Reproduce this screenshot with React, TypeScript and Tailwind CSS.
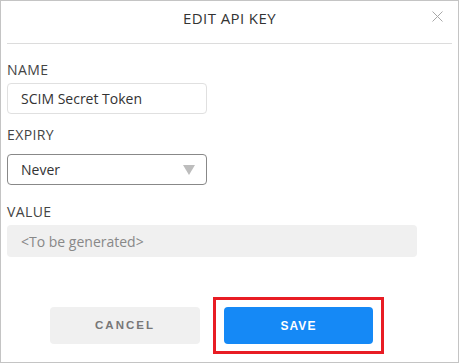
import * as React from "react"

export default function App() {
    return (
        <div className="w-[459px] h-[364px] bg-white" style={{ fontFamily: '"Open Sans", "Noto Sans", sans-serif' }}>
            <div className="w-[459px] h-[363px] border border-[#c4c4c4] flex flex-col relative">
                {/* header */}
                <div className="h-[42px] flex justify-center relative">
                    <span className="text-[15px] leading-[20px] mt-[7px] tracking-[0.4px] text-[#333]">EDIT API KEY</span>
                    <button className="absolute right-[15px] top-[10px] w-[11px] h-[11px]">
                        <svg viewBox="0 0 11 11" className="w-[11px] h-[11px]">
                            <path d="M0.5 0.5L10.5 10.5M10.5 0.5L0.5 10.5" stroke="#a8a8a8" strokeWidth="1" fill="none" />
                        </svg>
                    </button>
                </div>
                <div className="mx-[6px] h-px bg-[#dcdcdc]" />

                <div className="px-[6px] pt-[18px] flex flex-col">
                    <div className="text-[14px] leading-[16px] tracking-[0.4px] text-[#444]">NAME</div>
                    <div className="mt-[5px] w-[200px] h-[31px] border border-[#e0e0e0] rounded-[4px] flex items-center pl-[13px] text-[14px] text-[#333]">
                        SCIM Secret Token
                    </div>

                    <div className="mt-[13px] text-[14px] leading-[16px] tracking-[0.4px] text-[#444]">EXPIRY</div>
                    <div className="mt-[11px] w-[200px] h-[31px] border border-[#888] rounded-[4px] flex items-center justify-between pl-[13px] pr-[11px] text-[14px] text-[#333]">
                        <span>Never</span>
                        <svg viewBox="0 0 12 10" className="w-[12px] h-[10px]">
                            <path d="M0 0H12L6 10Z" fill="#bdbdbd" />
                        </svg>
                    </div>

                    <div className="mt-[19px] text-[14px] leading-[16px] tracking-[0.4px] text-[#444]">VALUE</div>
                    <div className="mt-[5px] w-[410px] h-[32px] bg-[#f0f0f0] rounded-[4px] flex items-center pl-[14px] text-[14px] text-[#888]">
                        &lt;To be generated&gt;
                    </div>
                </div>

                <div className="mt-auto mb-[8px] pl-[49px] flex items-center" style={{ fontFamily: '"Liberation Sans", Arial, sans-serif' }}>
                    <button className="w-[150px] h-[37px] bg-[#f0f0f0] rounded-[4px] text-[11.5px] tracking-[2px] font-bold text-[#777]">
                        CANCEL
                    </button>
                    <div className="ml-[13px] border-[3px] border-[#e81c24] px-[8px] py-[7px]">
                        <button className="w-[149px] h-[37px] bg-[#1589f6] rounded-[4px] text-[12px] tracking-[1px] font-bold text-white">
                            SAVE
                        </button>
                    </div>
                </div>
            </div>
        </div>
    )
}
